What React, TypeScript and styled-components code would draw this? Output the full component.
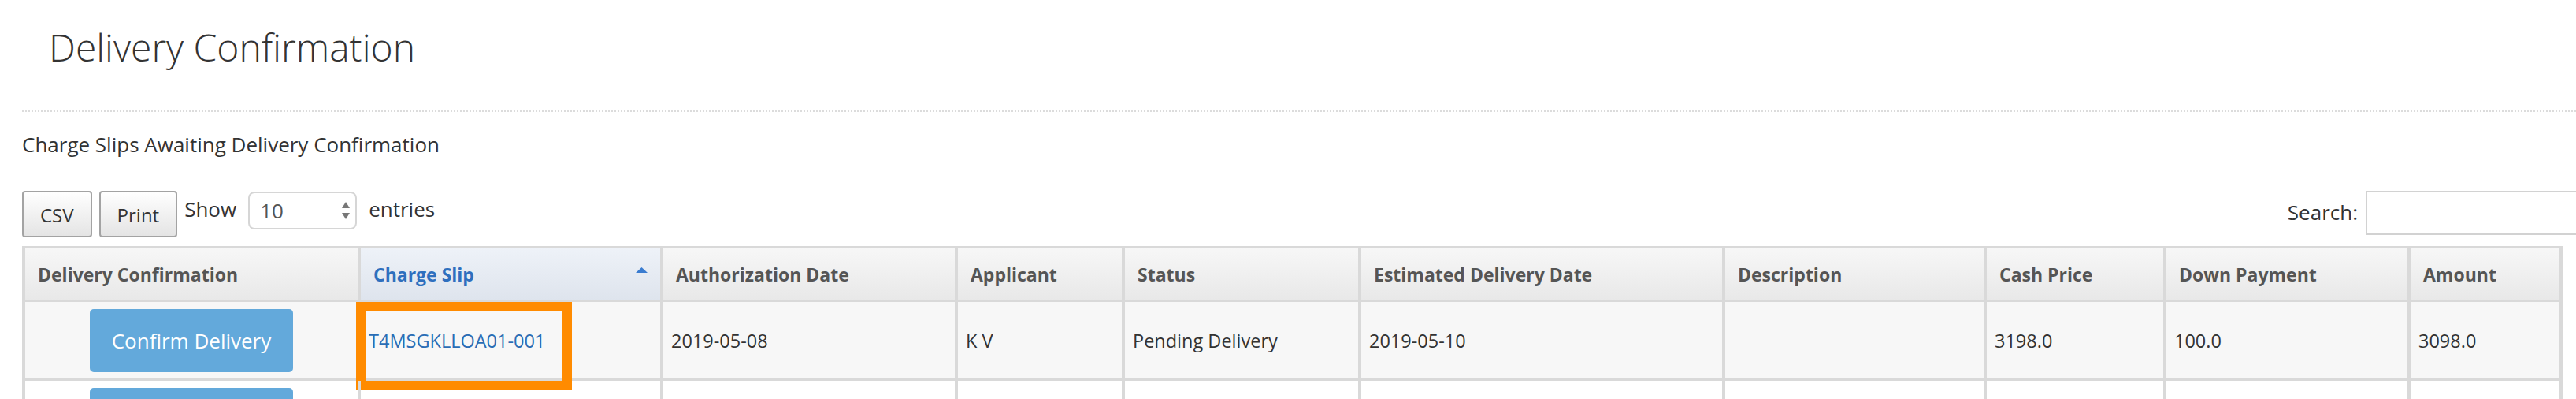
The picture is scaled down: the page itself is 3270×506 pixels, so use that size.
import React from "react";
import styled, { createGlobalStyle } from "styled-components";

const GlobalStyle = createGlobalStyle`
  html, body {
    margin: 0;
    padding: 0;
    background: #fff;
    overflow: hidden;
  }
  body {
    font-family: "Open Sans", "Liberation Sans", sans-serif;
    color: #333;
  }
`;

const Page = styled.div`
  padding-left: 28px;
`;

const Title = styled.h1`
  margin: 0;
  padding: 26px 0 0 34px;
  font-size: 48px;
  line-height: 68px;
  font-weight: 300;
  color: #333;
`;

const Divider = styled.hr`
  margin: 46px 0 0;
  height: 0;
  border: 0;
  border-top: 2px dotted #dcdcdc;
`;

const Subtitle = styled.h4`
  margin: 24px 0 0;
  font-size: 26px;
  line-height: 35px;
  font-weight: 400;
  color: #333;
`;

const Toolbar = styled.div`
  display: flex;
  justify-content: space-between;
  align-items: flex-start;
  width: 3225px;
  height: 59px;
  margin-top: 41px;
`;

const ToolGroup = styled.div`
  display: flex;
  align-items: flex-start;
  gap: 9px;
`;

const ToolButton = styled.button`
  box-sizing: border-box;
  height: 59px;
  padding: 2px 21px 0;
  border: 2px solid #a3a3a3;
  border-radius: 4px;
  background: linear-gradient(#ffffff, #e4e4e4);
  font-family: inherit;
  font-size: 24px;
  line-height: 33px;
  color: #333;
  white-space: nowrap;
  overflow: visible;
`;

const LengthControl = styled.label`
  display: flex;
  align-items: flex-start;
  gap: 15px;
  font-size: 26px;
  line-height: 35px;
`;

const LabelText = styled.span<{ $top: number }>`
  padding-top: ${(p) => p.$top}px;
`;

const SelectBox = styled.div`
  box-sizing: border-box;
  display: flex;
  align-items: center;
  justify-content: space-between;
  width: 138px;
  height: 48px;
  margin-top: 1px;
  padding: 0 7px 0 13px;
  border: 2px solid #d6d6d6;
  border-radius: 8px;
  background: #fff;
  color: #555;
`;

const SearchControl = styled.label`
  display: flex;
  align-items: flex-start;
  gap: 10px;
  margin-right: -80px;
  font-size: 26px;
  line-height: 35px;
`;

const SearchInput = styled.input`
  box-sizing: border-box;
  width: 330px;
  height: 56px;
  border: 2px solid #d2d2d2;
  border-radius: 0;
  outline: none;
`;

const Table = styled.table`
  width: 3225px;
  margin-top: 11px;
  table-layout: fixed;
  border-collapse: separate;
  border-spacing: 0;
  border: 2px solid #d9d9d9;
  border-bottom: 0;
`;

const HeadCell = styled.th<{ $width: number; $sorted?: boolean }>`
  position: relative;
  box-sizing: border-box;
  width: ${(p) => p.$width}px;
  height: 69px;
  padding: 0 16px;
  border-left: 2px solid #d9d9d9;
  border-right: 2px solid #d9d9d9;
  border-bottom: 2px solid #d9d9d9;
  text-align: left;
  font-size: 23px;
  font-weight: 700;
  white-space: nowrap;
  color: ${(p) => (p.$sorted ? "#2e6fbe" : "#555")};
  background: ${(p) =>
    p.$sorted
      ? "linear-gradient(#eef2f8, #dee4ed)"
      : "linear-gradient(#f7f7f7, #e8e8e8)"};
`;

const SortArrow = styled.svg`
  position: absolute;
  top: 25px;
  right: 16px;
`;

const Row = styled.tr<{ $odd?: boolean }>`
  background: ${(p) => (p.$odd ? "#f7f7f7" : "#fff")};
`;

const Cell = styled.td<{ $center?: boolean }>`
  position: relative;
  box-sizing: border-box;
  height: 100px;
  padding: 0 10px;
  border-left: 2px solid #d9d9d9;
  border-right: 2px solid #d9d9d9;
  border-bottom: 3px solid #d9d9d9;
  font-size: 23.5px;
  color: #333;
  vertical-align: middle;
  white-space: nowrap;
  text-align: ${(p) => (p.$center ? "center" : "left")};
`;

const ConfirmButton = styled.button`
  width: 258px;
  height: 80px;
  padding: 0;
  border: 0;
  border-radius: 5px;
  background: #63a9db;
  color: #fff;
  font-family: inherit;
  font-size: 26px;
  line-height: 80px;
`;

const SlipLink = styled.a`
  color: #2a6db5;
  text-decoration: none;
`;

const Highlight = styled.span`
  position: absolute;
  top: 0;
  left: -6px;
  box-sizing: border-box;
  width: 274px;
  height: 112px;
  border: 12px solid #ff8b00;
  pointer-events: none;
`;

const columns = [
  { label: "Delivery Confirmation", width: 426 },
  { label: "Charge Slip", width: 384, sorted: true },
  { label: "Authorization Date", width: 374 },
  { label: "Applicant", width: 212 },
  { label: "Status", width: 300 },
  { label: "Estimated Delivery Date", width: 462 },
  { label: "Description", width: 332 },
  { label: "Cash Price", width: 228 },
  { label: "Down Payment", width: 310 },
  { label: "Amount", width: 193 },
];

const rows = [
  {
    slip: "T4MSGKLLOA01-001",
    values: ["2019-05-08", "K V", "Pending Delivery", "2019-05-10", "", "3198.0", "100.0", "3098.0"],
    highlight: true,
  },
  {
    slip: "",
    values: ["", "", "", "", "", "", "", ""],
    highlight: false,
  },
];

const SpinnerArrows = () => (
  <svg width="10" height="22" viewBox="0 0 10 22">
    <polygon points="5,0 10,8 0,8" fill="#777" />
    <polygon points="0,14 10,14 5,22" fill="#777" />
  </svg>
);

const App = () => {
  return (
    <Page>
      <GlobalStyle />
      <Title>Delivery Confirmation</Title>
      <Divider />
      <Subtitle>Charge Slips Awaiting Delivery Confirmation</Subtitle>

      <Toolbar>
        <ToolGroup>
          <ToolButton>CSV</ToolButton>
          <ToolButton>Print</ToolButton>
          <LengthControl>
            <LabelText $top={6}>Show</LabelText>
            <SelectBox>
              <span>10</span>
              <SpinnerArrows />
            </SelectBox>
            <LabelText $top={6}>entries</LabelText>
          </LengthControl>
        </ToolGroup>
        <SearchControl>
          <LabelText $top={10}>Search:</LabelText>
          <SearchInput type="search" />
        </SearchControl>
      </Toolbar>

      <Table>
        <thead>
          <tr>
            {columns.map((col) => (
              <HeadCell key={col.label} $width={col.width} $sorted={col.sorted}>
                {col.label}
                {col.sorted && (
                  <SortArrow width="15" height="7" viewBox="0 0 15 7">
                    <polygon points="7.5,0 15,7 0,7" fill="#3a7cd0" />
                  </SortArrow>
                )}
              </HeadCell>
            ))}
          </tr>
        </thead>
        <tbody>
          {rows.map((row, i) => (
            <Row key={i} $odd={i % 2 === 0}>
              <Cell $center>
                <ConfirmButton>Confirm Delivery</ConfirmButton>
              </Cell>
              <Cell>
                <SlipLink href="#">{row.slip}</SlipLink>
                {row.highlight && <Highlight />}
              </Cell>
              {row.values.map((v, j) => (
                <Cell key={j}>{v}</Cell>
              ))}
            </Row>
          ))}
        </tbody>
      </Table>
    </Page>
  );
};

export default App;
